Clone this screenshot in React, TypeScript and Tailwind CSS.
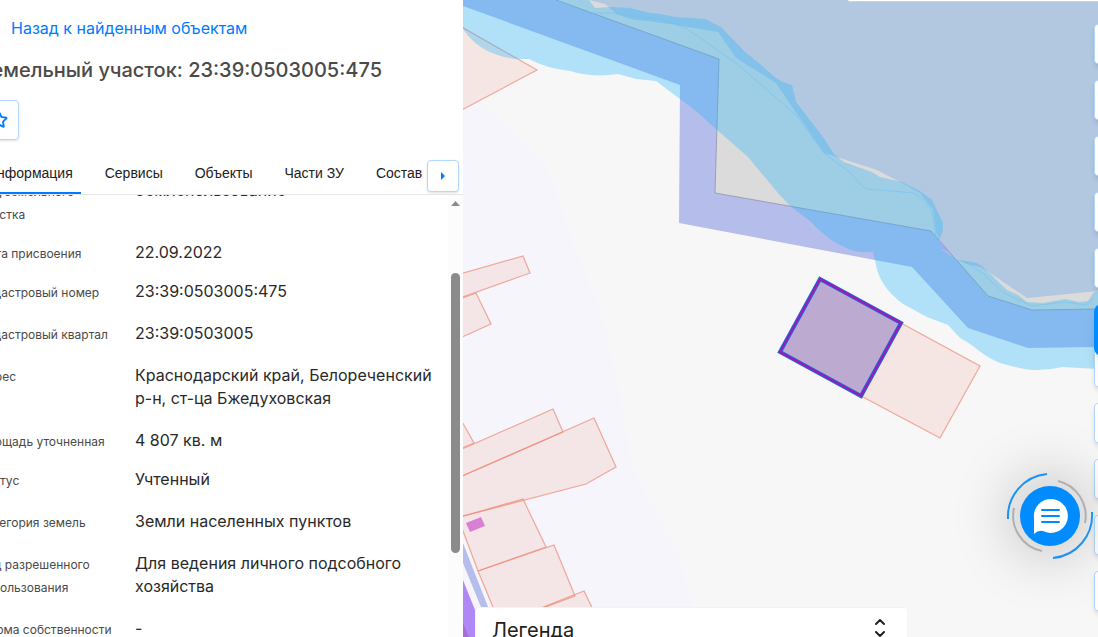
import { useState } from 'react';
import { ChevronDown, ChevronUp, Star } from 'lucide-react';

type Row = { label: string; value: string; tight?: boolean };

const tabs = ['Информация', 'Сервисы', 'Объекты', 'Части ЗУ', 'Состав'];

const rows: Row[] = [
  { label: 'Вид земельного участка', value: 'Землепользование', tight: true },
  { label: 'Дата присвоения', value: '22.09.2022', tight: true },
  { label: 'Кадастровый номер', value: '23:39:0503005:475' },
  { label: 'Кадастровый квартал', value: '23:39:0503005' },
  { label: 'Адрес', value: 'Краснодарский край, Белореченский р-н, ст-ца Бжедуховская' },
  { label: 'Площадь уточненная', value: '4 807 кв. м', tight: true },
  { label: 'Статус', value: 'Учтенный' },
  { label: 'Категория земель', value: 'Земли населенных пунктов' },
  { label: 'Вид разрешенного использования', value: 'Для ведения личного подсобного хозяйства' },
  { label: 'Форма собственности', value: '-' },
];

const parcels = [
  '460,26 537,70 460,111',
  '460,274 523,256 530,273 460,298',
  '460,299 476,293 491,324 460,338',
  '460,418 474,443 460,449',
  '460,450 553,409 563,432 460,477',
  '460,477 594,418 616,467 586,484 460,517',
  '460,517 523,499 546,547 478,571 460,523',
  '478,571 554,545 575,596 500,624',
  '500,624 584,591 600,624',
  '901,323 980,366 940,438 861,396',
];

const toolsAbove = ['Поиск', 'Слои', 'Измерения', 'Печать', 'Закладки'];
const toolsBelow = ['Приблизить', 'Отдалить', 'Моё местоположение', 'Обзор', 'Помощь'];

const MapCanvas = () => (
  <svg className="block h-full w-full" viewBox="463 0 635 637" preserveAspectRatio="xMinYMin slice" aria-hidden="true">
    <rect x="463" width="635" height="637" fill="#f7f7f7" />
    <polygon points="463,83 483,105 546,167 552,180 572,240 602,315 607,337 623,412 632,470 655,510 680,560 700,637 463,637" fill="#f5f5fb" />

    {/* protected zone and reservoir */}
    <polygon points="556,0 719,59 715,193 931,231 988,296 1032,310 1098,309 1098,0" fill="#dbdbdb" />
    <polygon
      points="589,0 605,4 617,14 630,19 663,23 718,32 736,58 776,83 790,104 824,153 843,159 877,170 900,182 920,193 933,210 936,232 940,241 950,254 967,264 980,267 987,271 1027,298 1098,291 1098,0"
      fill="#b2c7e0"
    />
    <path
      d="M463 0H556L719 59L715 193L931 231L988 296L1032 310L1098 309V347L1028 348L968 328L912 267L679 223L680 85L463 6Z"
      fill="#b5bdeb"
    />
    <polyline points="556,0 719,59 715,193 931,231 988,296 1032,310 1098,309" fill="none" stroke="#8f93a8" strokeOpacity="0.8" strokeWidth="1" />

    {parcels.map((points) => (
      <polygon key={points} points={points} fill="#f0543a" fillOpacity="0.1" stroke="#ef8f7c" strokeOpacity="0.75" strokeWidth="1.2" />
    ))}

    {/* shoreline strip */}
    <path
      d="M463 0H589L595 8L610 7L630 8L650 13L660 14L676 17L705 19L721 27L745 52L760 64L776 78L783 82L792 85L796 102L823 137L834 154L844 162L872 172L880 177L902 182L920 191L932 200L943 223L943 230L939 241L942 250L950 255L960 260L977 263L983 267L1007 290L1018 295L1027 302L1043 303L1065 299L1080 302L1088 301L1093 293L1098 291V369L1062 367Q1050 370 1037 370T1000 363Q988 358 978 350T960 338L948 325L927 317L903 304Q880 287 876 265L873 252H860Q835 248 810 221L790 206L778 193L748 157L716 129L696 111L656 81L636 79L618 74Q593 78 570 71Q545 68 529 59L516 59Q480 55 463 29Z"
      fill="rgb(31,181,253)"
      fillOpacity="0.32"
    />
    <path
      d="M559 1L585 13H612L665 20L687 29L736 63L795 114L824 153L852 174Q861 187 867 189L914 193Q928 201 932 213L937 243Q941 257 967 263L984 274L1004 293L1032 306L1065 302L1086 305L1094 298"
      fill="none"
      stroke="#72c2ed"
      strokeOpacity="0.6"
      strokeWidth="1"
    />
    <polygon points="938,239 942,243 949,253 942,249" fill="#98adee" />

    <polygon points="463,543 488,607 481,607 463,563" fill="#b5bdeb" />
    <polygon points="463,580 475,610 475,637 463,637" fill="#b088f5" />
    <polygon points="463,623 469,637 463,637" fill="#a870d6" />
    <polygon points="466,523 481,517 485,526 470,532" fill="#d880d4" />

    {/* selected parcel */}
    <polygon points="820,279 901,323 861,396 780,352" fill="#bcaad1" stroke="#1d68e0" strokeWidth="4" />
    <polygon points="820,279 901,323 861,396 780,352" fill="none" stroke="#a01ab0" strokeWidth="2" />
  </svg>
);

const ToolButton = ({ label }: { label: string }) => (
  <button type="button" aria-label={label} className="h-10 w-10 shrink-0 rounded border border-[#b3d8ff] bg-white shadow-md" />
);

const ChatButton = () => (
  <button type="button" aria-label="Чат" className="absolute right-1 bottom-[77px] h-[88px] w-[88px] rounded-full">
    <span className="absolute inset-4 rounded-full shadow-[0_0_60px_12px_rgba(0,0,0,0.22)]" />
    <svg className="relative block h-full w-full" viewBox="0 0 88 88" fill="none">
      <circle cx="44" cy="44" r="30" fill="#008cff" />
      <path d="M2 47A43 43 0 0 1 41 2" stroke="#1a93f7" strokeWidth="2" />
      <path d="M86 40A43 43 0 0 1 47 86" stroke="#1a93f7" strokeWidth="2" />
      <path d="M52 9A36 36 0 0 1 79 51" stroke="#b0b0b0" strokeWidth="2" />
      <path d="M8 36A36 36 0 0 0 36 79" stroke="#b0b0b0" strokeWidth="2" />
      <path d="M28 62V46A17 17 0 1 1 37 59Q32 58 28 62Z" fill="#fff" />
      <path d="M36 38H53M36 44H53M36 50H53" stroke="#008cff" strokeWidth="2" strokeLinecap="round" />
    </svg>
  </button>
);

export default function App() {
  const [active, setActive] = useState(tabs[0]);

  return (
    <div className="flex h-screen overflow-hidden bg-white font-['Inter',sans-serif]">
      <aside className="flex w-[463px] shrink-0 flex-col overflow-hidden bg-white">
        <div className="-ml-[21px] flex h-[195px] shrink-0 flex-col border-b border-[#e8e8e8]">
          <a href="#results" className="mt-4 ml-8 self-start text-base leading-6 text-[#007bff]">
            Назад к найденным объектам
          </a>
          <h1 className="mt-4 text-xl leading-7 font-medium whitespace-nowrap text-[#4a4a4a]">Земельный участок: 23:39:0503005:475</h1>
          <button type="button" aria-label="В избранное" className="mt-4 flex h-10 w-10 items-center justify-center rounded-sm border border-[#b3d8ff] shadow-sm">
            <Star size={18} strokeWidth={2.5} className="text-[#007bff]" />
          </button>
          <div className="mt-auto flex items-end pr-1">
            <nav className="flex min-w-0 flex-1 gap-4 overflow-hidden font-['Liberation_Sans',sans-serif] text-sm text-[#212121]">
              {tabs.map((tab) => (
                <button
                  key={tab}
                  type="button"
                  onClick={() => setActive(tab)}
                  className={`h-10 border-b-2 px-2 whitespace-nowrap ${active === tab ? 'border-[#007bff]' : 'border-transparent'}`}
                >
                  {tab}
                </button>
              ))}
            </nav>
            <button type="button" aria-label="Вперёд" className="mb-0.5 flex h-8 w-8 shrink-0 items-center justify-center rounded border border-[#b3d8ff] bg-white shadow">
              <svg width="4" height="8" viewBox="0 0 4 8" fill="#007bff"><path d="M0 0L4 4L0 8Z" /></svg>
            </button>
          </div>
        </div>

        <div className="flex min-h-0 flex-1">
          <div className="-ml-[21px] flex-1 overflow-hidden">
            <dl className="-mt-4">
              {rows.map((row) => (
                <div key={row.label} className={`flex leading-[23px] ${row.tight ? 'mb-4' : 'mb-[19px]'}`}>
                  <dt className="-mb-px w-[156px] shrink-0 pt-px pr-4 text-xs leading-[23px] text-[#4a4a4a]">{row.label}</dt>
                  <dd className="pr-4 text-base leading-[23px] text-[#292929]">{row.value}</dd>
                </div>
              ))}
            </dl>
          </div>
          <div className="flex w-[15px] shrink-0 flex-col items-center bg-[#fcfcfc] pt-1.5">
            <svg width="9" height="5" viewBox="0 0 9 5" fill="#8b8b8b"><path d="M0 5L4.5 0L9 5Z" /></svg>
            <div className="mt-[67px] h-[280px] w-[9px] rounded-full bg-[#8b8b8b]" />
          </div>
        </div>
      </aside>

      <main className="relative min-w-0 flex-1 overflow-hidden">
        <MapCanvas />

        <div className="absolute top-0 right-0 h-0.5 w-[250px] rounded-bl border-b border-[#b3d8ff] bg-white" />

        <div className="absolute top-6 -right-9 flex flex-col gap-4">
          {toolsAbove.map((tool) => <ToolButton key={tool} label={tool} />)}
          <div className="flex flex-col">
            <button type="button" aria-label="Карта" className="z-10 h-[52px] w-10 rounded-lg bg-[#008cff] shadow-lg" />
            <div className="-mt-[9px] flex flex-col gap-4">
              {toolsBelow.map((tool) => <ToolButton key={tool} label={tool} />)}
            </div>
          </div>
        </div>

        <ChatButton />

        <section className="absolute bottom-0 left-3 flex h-[30px] w-[433px] items-start justify-between overflow-hidden rounded-t border border-b-0 border-[#edf3ff] bg-white pt-2 pr-[19px] pl-4">
          <h2 className="text-xl leading-7 text-[#212121]">Легенда</h2>
          <button type="button" aria-label="Развернуть легенду" className="flex flex-col text-[#212121]">
            <ChevronUp size={16} strokeWidth={3} className="-mt-0.5" />
            <ChevronDown size={16} strokeWidth={3} className="-mt-1" />
          </button>
        </section>
      </main>
    </div>
  );
}
